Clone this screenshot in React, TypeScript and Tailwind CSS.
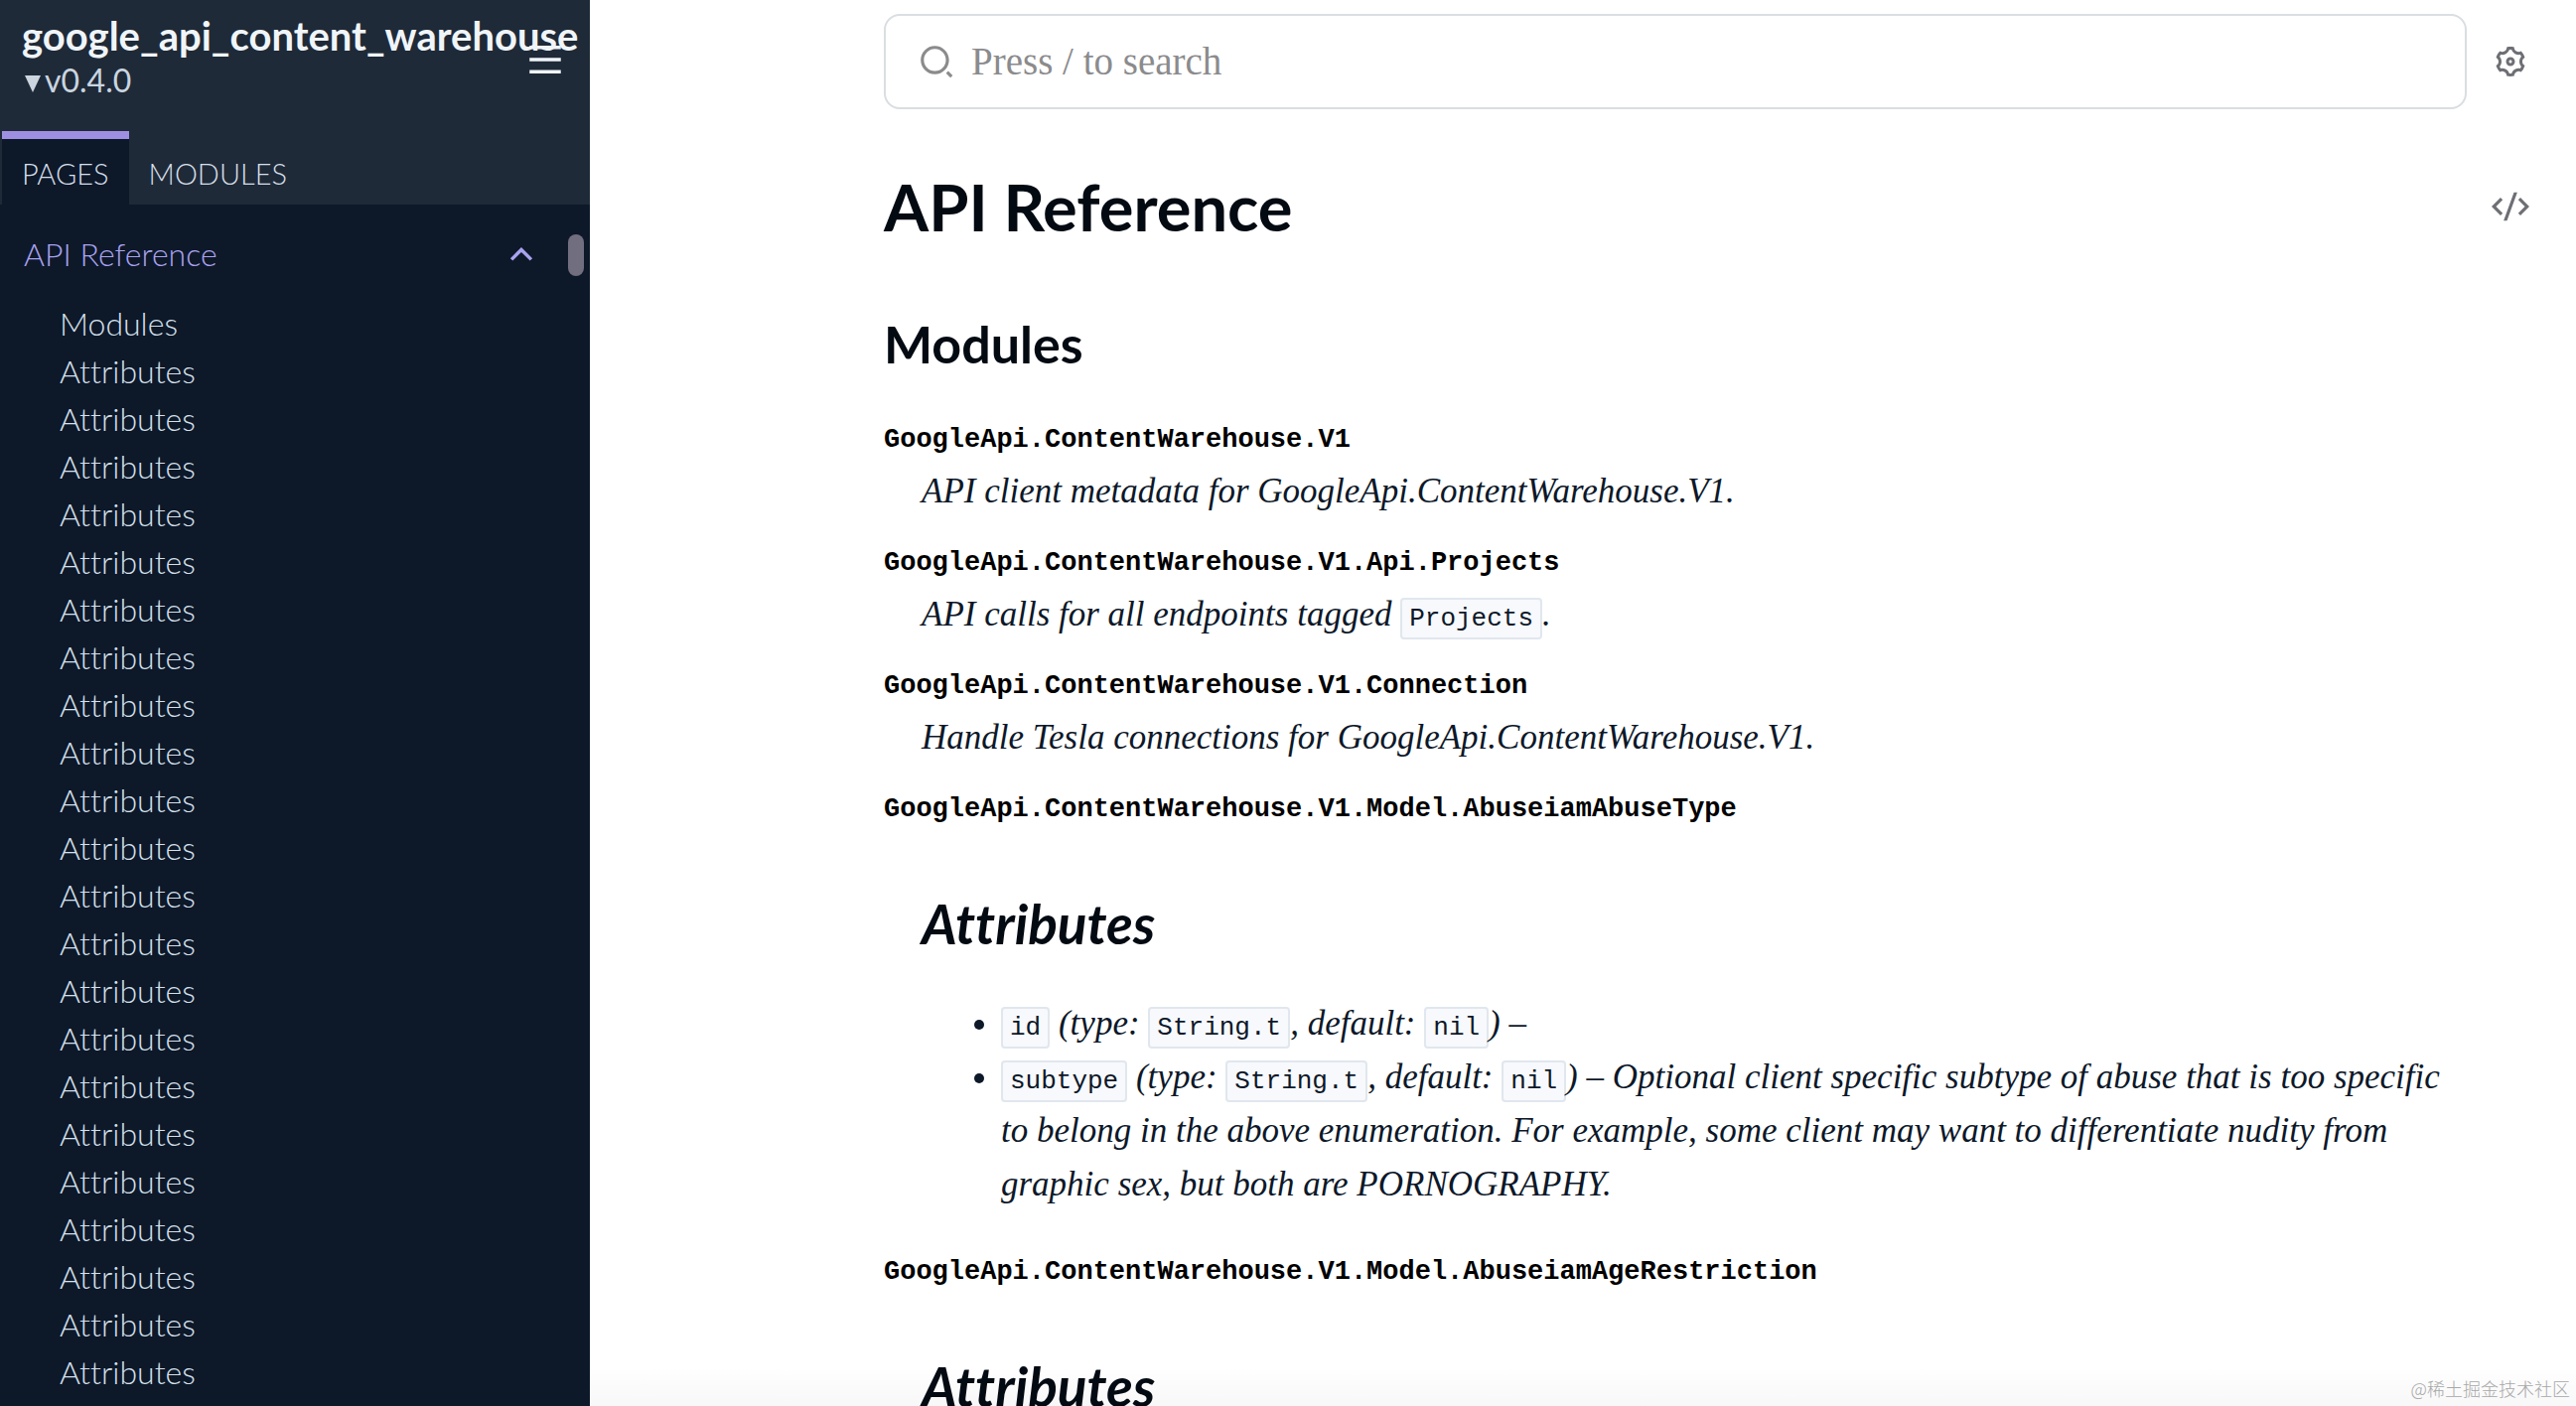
import { useState } from "react";
import type { ReactNode } from "react";
import { RiArrowUpSLine, RiCodeSSlashLine, RiMenuLine, RiSearch2Line, RiSettings3Line } from "react-icons/ri";

const sections = ["Modules", ...Array(22).fill("Attributes")];

function Code({ children }: { children: ReactNode }) {
  return (
    <code className="rounded-sm border-2 border-[#e1e7ee] bg-[#f7f9fc] px-[7px] py-[4px] font-['Liberation_Mono',monospace] text-[26px] leading-none not-italic">
      {children}
    </code>
  );
}

function Entry({ name, children }: { name: string; children: ReactNode }) {
  return (
    <div className="mb-5">
      <dt className="font-['Liberation_Mono',monospace] text-[27px] leading-[50px] font-bold text-black">
        <a href="#">{name}</a>
      </dt>
      <dd className="ml-[38px] text-[35px] leading-[54px] italic">{children}</dd>
    </div>
  );
}

function AttributesHeading() {
  return (
    <h2 className="mt-[58px] font-[Lato,sans-serif] text-[55px] leading-[64px] font-bold text-[#030a12]">Attributes</h2>
  );
}

export default function App() {
  const [tab, setTab] = useState("pages");
  const [query, setQuery] = useState("");

  const tabClass = (name: string) =>
    tab === name ? "border-[#9f8fe3] bg-[#0d1829]" : "border-transparent";

  return (
    <div className="flex h-screen overflow-hidden bg-white font-['Liberation_Serif',serif] text-[#0d1829] [font-variant-ligatures:none]">
      {/* Sidebar */}
      <aside className="flex w-[594px] shrink-0 flex-col bg-[#0d1829] font-[Lato,sans-serif]">
        <div className="bg-[#1f2a38]">
          <div className="relative flex h-[132px] flex-col px-[22px] pt-2.5">
            <a href="#" className="text-[40px] leading-[52px] font-bold text-[#f0f5f9]">google_api_content_warehouse</a>
            <button className="flex items-center self-start text-[32px] leading-[38px] text-[#cad5e0]">
              <svg viewBox="0 0 16 17" className="mt-1.5 mr-1 ml-[3px] w-4" fill="currentColor">
                <path d="M0 0h16L8 17z" />
              </svg>
              v0.4.0
            </button>
            <button aria-label="Toggle sidebar" className="absolute top-[39px] right-6 text-[#f0f5f9]">
              <RiMenuLine size={42} />
            </button>
          </div>
          <div className="flex px-0.5 text-[29px] leading-[62px] font-light text-[#d5dfe9]">
            <button className={`border-t-8 px-5 pt-1 ${tabClass("pages")}`} onClick={() => setTab("pages")}>PAGES</button>
            <button className={`border-t-8 px-5 pt-1 ${tabClass("modules")}`} onClick={() => setTab("modules")}>MODULES</button>
          </div>
        </div>

        <nav className="relative min-h-0 flex-1 overflow-hidden pt-[26px] text-[32px] leading-[48px] font-light">
          <div className="flex items-center justify-between pr-12 pl-6 text-[#a9a2ee]">
            <a href="#">API Reference</a>
            <button aria-label="Collapse">
              <RiArrowUpSLine size={42} />
            </button>
          </div>
          <ul className="mt-[22px] pl-[60px] text-[#d5e0ec]">
            {sections.map((title, i) => (
              <li key={i}>
                <a href="#">{title}</a>
              </li>
            ))}
          </ul>
          <div className="absolute top-[30px] right-1.5 h-[42px] w-4 rounded-full bg-[#716e80]" />
        </nav>
      </aside>

      <main className="relative min-w-0 flex-1 overflow-hidden pl-[296px]">
        <div className="flex pt-3.5">
          <label className="flex h-24 flex-1 items-center gap-4 rounded-2xl border-2 border-[#d9dee1] pl-8 text-[#8b8b8d]">
            <RiSearch2Line size={38} />
            <input
              type="text"
              aria-label="Search"
              placeholder="Press / to search"
              value={query}
              onChange={(e) => setQuery(e.target.value)}
              className="min-w-0 flex-1 text-[39px] outline-none placeholder:text-[#8b8b8d]"
            />
          </label>
          <button aria-label="Settings" className="flex w-[110px] items-center pl-[26px] text-[#6d6f74]">
            <RiSettings3Line size={36} />
          </button>
        </div>

        <div className="mt-[58px] flex items-center justify-between">
          <h1 className="font-[Lato,sans-serif] text-[65px] leading-[80px] font-bold text-[#030a12]">API Reference</h1>
          <a href="#" aria-label="View source" className="w-[110px] shrink-0 pl-[25px] text-[#6d6f74]">
            <RiCodeSSlashLine size={38} />
          </a>
        </div>

        <div className="mr-[110px]">
          <h2 className="mt-[66px] mb-10 font-[Lato,sans-serif] text-[52px] leading-[64px] font-bold text-[#030a12]">Modules</h2>
          <dl>
            <Entry name="GoogleApi.ContentWarehouse.V1">API client metadata for GoogleApi.ContentWarehouse.V1.</Entry>
            <Entry name="GoogleApi.ContentWarehouse.V1.Api.Projects">
              API calls for all endpoints tagged <Code>Projects</Code>.
            </Entry>
            <Entry name="GoogleApi.ContentWarehouse.V1.Connection">
              Handle Tesla connections for GoogleApi.ContentWarehouse.V1.
            </Entry>
            <Entry name="GoogleApi.ContentWarehouse.V1.Model.AbuseiamAbuseType">
              <AttributesHeading />
              <ul className="mt-[42px] mb-9 list-disc pl-20">
                <li>
                  <Code>id</Code> (type: <Code>String.t</Code>, default: <Code>nil</Code>) –
                </li>
                <li>
                  <Code>subtype</Code> (type: <Code>String.t</Code>, default: <Code>nil</Code>) – Optional client specific
                  subtype of abuse that is too specific to belong in the above enumeration. For example, some client may
                  want to differentiate nudity from graphic sex, but both are PORNOGRAPHY.
                </li>
              </ul>
            </Entry>
            <Entry name="GoogleApi.ContentWarehouse.V1.Model.AbuseiamAgeRestriction">
              <AttributesHeading />
            </Entry>
          </dl>
        </div>

        {/* bottom fade + watermark */}
        <div className="absolute inset-x-0 bottom-0 flex h-10 items-center justify-end bg-linear-to-b from-transparent to-black/3 pt-1 pr-1.5 font-['Noto_Sans_CJK_SC',sans-serif] text-[18px] font-light text-[#a8a8a8]">
          @稀土掘金技术社区
        </div>
      </main>
    </div>
  );
}
